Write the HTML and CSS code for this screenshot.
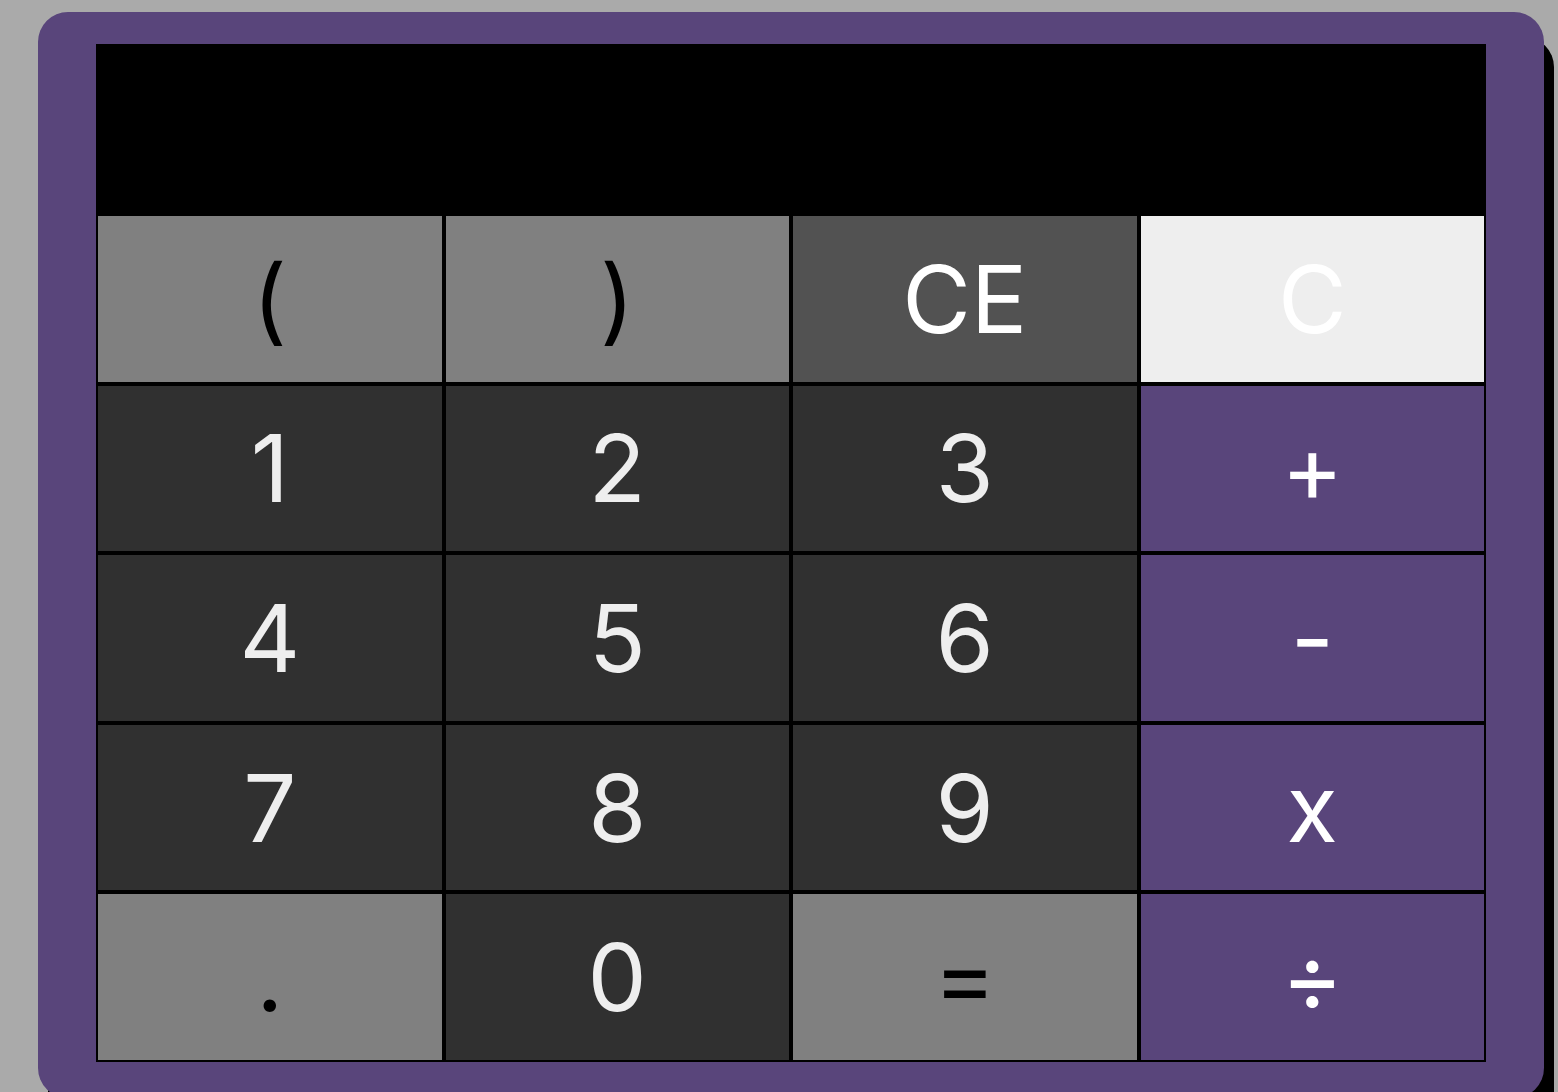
FILE: index.html
```html
<!DOCTYPE html>
<html lang="en">
<head>
<meta charset="utf-8">
<title>Calculator</title>
<link rel="stylesheet" href="styles.css">
</head>
<body>
<div class="calculator">
  <div class="display"></div>
  <div class="keys">
    <button class="key key-paren">(</button>
    <button class="key key-paren">)</button>
    <button class="key key-ce">CE</button>
    <button class="key key-c">C</button>
    <button class="key key-num">1</button>
    <button class="key key-num">2</button>
    <button class="key key-num">3</button>
    <button class="key key-op">+</button>
    <button class="key key-num">4</button>
    <button class="key key-num">5</button>
    <button class="key key-num">6</button>
    <button class="key key-op">-</button>
    <button class="key key-num">7</button>
    <button class="key key-num">8</button>
    <button class="key key-num">9</button>
    <button class="key key-op">x</button>
    <button class="key key-paren">.</button>
    <button class="key key-num">0</button>
    <button class="key key-paren">=</button>
    <button class="key key-op">÷</button>
  </div>
</div>
</body>
</html>
```
FILE: styles.css
```css
html, body {
  margin: 0;
  padding: 0;
}
body {
  background: #aaaaaa;
  height: 1092px;
  overflow: hidden;
  font-family: "Inter", "Liberation Sans", sans-serif;
}
.calculator {
  box-sizing: border-box;
  margin: 12px 0 0 38px;
  width: 1506px;
  padding: 32px 58px 36px;
  background: #59457b;
  border-radius: 30px;
  box-shadow: 10px 25px 0 #000;
}
.display {
  height: 170px;
  background: #000;
}
.keys {
  display: grid;
  grid-template-columns: repeat(4, 1fr);
  grid-template-rows: repeat(5, 169.6px);
}
.key {
  box-sizing: border-box;
  margin: 0;
  padding: 0;
  border: 2px solid #000;
  border-radius: 0;
  font-family: "Inter", "Liberation Sans", sans-serif;
  font-size: 94px;
  font-weight: 400;
  line-height: 1;
  display: flex;
  align-items: center;
  justify-content: center;
}
.key-paren {
  background: #808080;
  color: #000;
}
.key-ce {
  background: #525252;
  color: #fff;
}
.key-c {
  background: #eeeeee;
  color: #fff;
}
.key-num {
  background: #303030;
  color: #eeeeee;
}
.key-op {
  background: #59457b;
  color: #fff;
}
```
